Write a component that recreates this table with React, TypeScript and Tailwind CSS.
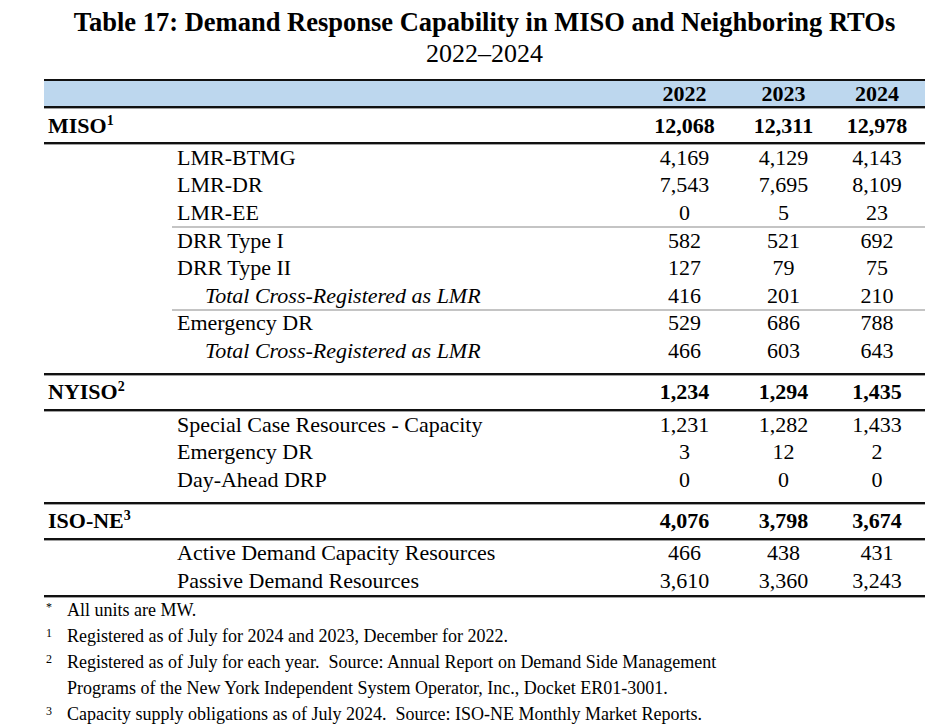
import React from 'react';

type Row = { label: string; values: string[]; italic?: boolean; ruleAbove?: boolean };
type Section = { name: string; note: string; totals: string[]; rows: Row[]; padBottom?: boolean };

const sections: Section[] = [
  {
    name: 'MISO',
    note: '1',
    totals: ['12,068', '12,311', '12,978'],
    padBottom: true,
    rows: [
      { label: 'LMR-BTMG', values: ['4,169', '4,129', '4,143'] },
      { label: 'LMR-DR', values: ['7,543', '7,695', '8,109'] },
      { label: 'LMR-EE', values: ['0', '5', '23'] },
      { label: 'DRR Type I', values: ['582', '521', '692'], ruleAbove: true },
      { label: 'DRR Type II', values: ['127', '79', '75'] },
      { label: 'Total Cross-Registered as LMR', values: ['416', '201', '210'], italic: true },
      { label: 'Emergency DR', values: ['529', '686', '788'], ruleAbove: true },
      { label: 'Total Cross-Registered as LMR', values: ['466', '603', '643'], italic: true },
    ],
  },
  {
    name: 'NYISO',
    note: '2',
    totals: ['1,234', '1,294', '1,435'],
    padBottom: true,
    rows: [
      { label: 'Special Case Resources - Capacity', values: ['1,231', '1,282', '1,433'] },
      { label: 'Emergency DR', values: ['3', '12', '2'] },
      { label: 'Day-Ahead DRP', values: ['0', '0', '0'] },
    ],
  },
  {
    name: 'ISO-NE',
    note: '3',
    totals: ['4,076', '3,798', '3,674'],
    rows: [
      { label: 'Active Demand Capacity Resources', values: ['466', '438', '431'] },
      { label: 'Passive Demand Resources', values: ['3,610', '3,360', '3,243'] },
    ],
  },
];

const notes = [
  { mark: '*', lines: ['All units are MW.'] },
  { mark: '1', lines: ['Registered as of July for 2024 and 2023, December for 2022.'] },
  {
    mark: '2',
    lines: [
      'Registered as of July for each year.  Source: Annual Report on Demand Side Management',
      'Programs of the New York Independent System Operator, Inc., Docket ER01-3001.',
    ],
  },
  { mark: '3', lines: ['Capacity supply obligations as of July 2024.  Source: ISO-NE Monthly Market Reports.'] },
];

// year columns are not equal width in the source table
const colWidths = ['w-[107px]', 'w-[91px]', 'w-[96px]'];

const Rule = () => <div className="h-[2px] bg-[#111] shadow-[0_1px_0_#a0a0a0]" />;

const Values = ({ values, bold }: { values: string[]; bold?: boolean }) => (
  <>
    {values.map((v, i) => (
      <div key={i} className={`${colWidths[i]} text-center ${bold ? 'font-bold' : ''}`}>
        {v}
      </div>
    ))}
  </>
);

export default function App() {
  return (
    <div
      className="w-[952px] h-[726px] bg-white text-black overflow-hidden"
      style={{ fontFamily: '"Liberation Serif", "Times New Roman", serif' }}
    >
      <div className="ml-[44px] w-[881px] pt-[7px]">
        <h1 className="text-center text-[26.5px] font-bold leading-[30px]">
          Table 17: Demand Response Capability in MISO and Neighboring RTOs
        </h1>
        <div className="text-center text-[26px] leading-[30px] mt-[2px]">2022–2024</div>

        <div className="mt-[10px] text-[22px]">
          <Rule />
          <div className="flex h-[25px] items-center bg-[#bdd7ee]">
            <div className="flex-1" />
            <Values values={['2022', '2023', '2024']} bold />
          </div>
          <Rule />

          {sections.map((s) => (
            <div key={s.name}>
              <div className="flex h-[34px] items-center font-bold">
                <div className="flex-1 pl-[4px]">
                  {s.name}
                  <sup className="text-[14px] relative top-[-8px]">{s.note}</sup>
                </div>
                <Values values={s.totals} bold />
              </div>
              <Rule />
              <div className={s.padBottom ? 'pb-[8px]' : 'pb-0'}>
                {s.rows.map((r, i) => (
                  <div key={i} className="flex flex-col">
                    {r.ruleAbove && <div className="ml-[128px] h-[2px] bg-[#c4c4c4] -mt-[1px] -mb-[1px]" />}
                    <div className="flex h-[27.6px] items-center leading-none">
                      <div className={`flex-1 ${r.italic ? 'pl-[161px] italic' : 'pl-[133px]'}`}>{r.label}</div>
                      <Values values={r.values} />
                    </div>
                  </div>
                ))}
              </div>
              <Rule />
            </div>
          ))}
        </div>

        <div className="text-[18px] leading-[26px]">
          {notes.map((n) => (
            <div key={n.mark} className="flex">
              <div className="w-[23px] pl-[2px] text-[12px] leading-[20px]">{n.mark}</div>
              <div>
                {n.lines.map((l, i) => (
                  <div key={i} className="whitespace-pre">
                    {l}
                  </div>
                ))}
              </div>
            </div>
          ))}
        </div>
      </div>
    </div>
  );
}
